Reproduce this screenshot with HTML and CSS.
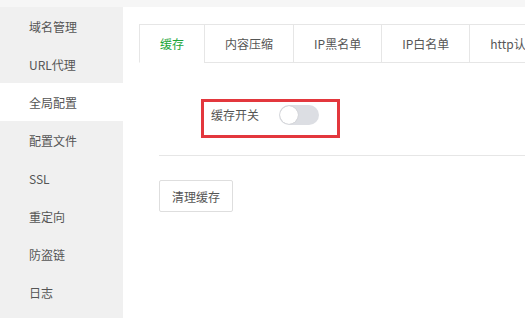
FILE: index.html
```html
<!DOCTYPE html>
<html lang="zh-CN">
<head>
<meta charset="utf-8">
<title>网站设置</title>
<link rel="stylesheet" href="styles.css">
</head>
<body>
<div class="page">
  <nav class="sidebar">
    <div class="item">域名管理</div>
    <div class="item">URL代理</div>
    <div class="item active">全局配置</div>
    <div class="item">配置文件</div>
    <div class="item">SSL</div>
    <div class="item">重定向</div>
    <div class="item">防盗链</div>
    <div class="item">日志</div>
  </nav>
  <main class="main">
    <div class="tabs">
      <div class="tab active">缓存</div>
      <div class="tab">内容压缩</div>
      <div class="tab">IP黑名单</div>
      <div class="tab">IP白名单</div>
      <div class="tab">http认证</div>
    </div>
    <div class="form">
      <div class="row-wrap">
        <div class="row">
          <span class="label">缓存开关</span>
          <span class="switch"><span class="knob"></span></span>
        </div>
      </div>
      <div class="divider"></div>
      <button class="btn">清理缓存</button>
    </div>
  </main>
</div>
</body>
</html>
```
FILE: styles.css
```css
html, body {
  margin: 0;
  padding: 0;
  background: #f6f6f6;
  font-family: "Noto Sans CJK SC", "Microsoft YaHei", sans-serif;
  font-size: 12px;
  color: #555;
}
.page {
  display: flex;
  padding-top: 7px;
  height: 311px;
  overflow: hidden;
}
.sidebar {
  width: 123px;
  flex: none;
  background: #f0f0f0;
}
.item {
  height: 38px;
  line-height: 40px;
  padding-left: 29px;
  color: #555;
  box-sizing: border-box;
  overflow: hidden;
}
.item.active {
  background: #fff;
}
.main {
  flex: 1;
  background: #fff;
  padding: 17px 0 0 16px;
  overflow: hidden;
  min-width: 0;
}
.tabs {
  display: flex;
  white-space: nowrap;
}
.tab {
  flex: none;
  box-sizing: border-box;
  height: 39px;
  line-height: 38px;
  padding: 0 20px;
  border-top: 1px solid #e6e6e6;
  border-left: 1px solid #e6e6e6;
  border-bottom: 1px solid #e6e6e6;
  background: #fff;
  color: #555;
}
.tab.active {
  color: #20a53a;
  border-bottom-color: #fff;
}
.form {
  padding-left: 20px;
}
.row-wrap {
  padding: 36px 0 0 42px;
}
.row {
  display: inline-flex;
  align-items: center;
  border: 3px solid #e3373d;
  padding: 3px 18px 10px 7px;
  height: 20px;
}
.label {
  line-height: 20px;
  margin-right: 20px;
  color: #555;
}
.switch {
  position: relative;
  width: 40px;
  height: 20px;
  border-radius: 10px;
  background: #dcdee3;
}
.knob {
  position: absolute;
  left: 1px;
  top: 1px;
  width: 18px;
  height: 18px;
  border-radius: 50%;
  background: #fff;
  box-shadow: 0 0 1px rgba(0,0,0,0.25);
}
.divider {
  height: 1px;
  background: #e6e6e6;
  margin-top: 17px;
}
.btn {
  margin-top: 24px;
  width: 74px;
  height: 32px;
  border: 1px solid #dedede;
  border-radius: 2px;
  background: #fff;
  font-family: inherit;
  font-size: 12px;
  color: #555;
  padding: 0;
}
```
